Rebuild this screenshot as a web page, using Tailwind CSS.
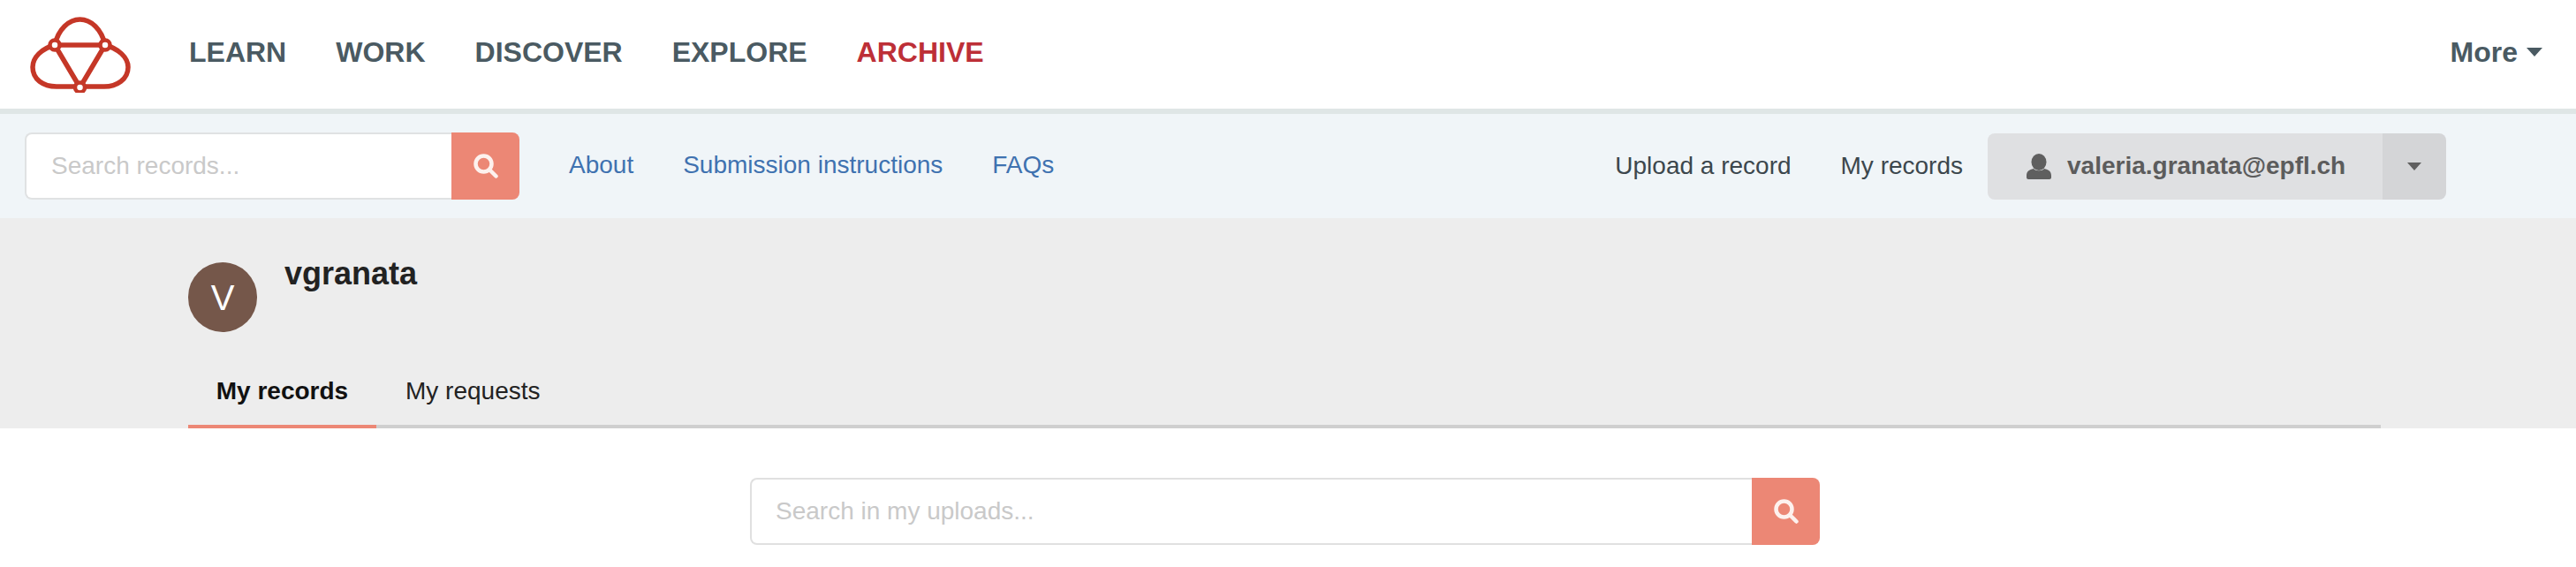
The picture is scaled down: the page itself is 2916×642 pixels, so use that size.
<!DOCTYPE html>
<html>
<head>
<title>My records</title>
<script src="https://cdn.jsdelivr.net/npm/@tailwindcss/browser@4"></script>
</head>
<body class="bg-white font-['Liberation_Sans',Arial,sans-serif] overflow-hidden">
  <!-- top nav -->
  <header class="flex items-center h-[129px] border-b-[6px] border-[#dfe6e6] pl-[30px] pr-[38px]">
    <svg class="w-[120px] h-[90px] shrink-0 -mt-[3px]" viewBox="30 15 120 90" fill="none" stroke="#c53727" stroke-width="5.5">
      <path d="M62 51C47 55 37 65 37 76C37 90 49 98 64 98H118C132 98 145 90 145 76C145 65 134 55 119 51"/>
      <path d="M62 51C66 33 78 22 90.5 22C103 22 115 33 119 51"/>
      <path d="M62 51H119L90.5 99Z" stroke-linejoin="round"/>
      <circle cx="62" cy="51" r="5.5" fill="#fff" stroke-width="4.5"/>
      <circle cx="119" cy="51" r="5.5" fill="#fff" stroke-width="4.5"/>
      <circle cx="90.5" cy="99" r="5.5" fill="#fff" stroke-width="4.5"/>
    </svg>
    <nav class="flex items-center gap-[56px] ml-[64px] pb-[6px] text-[32px] font-bold text-[#4a5a62]">
      <a>LEARN</a>
      <a>WORK</a>
      <a>DISCOVER</a>
      <a>EXPLORE</a>
      <a class="text-[#bd2f37]">ARCHIVE</a>
    </nav>
    <div class="ml-auto flex items-center gap-[10px] pb-[6px] text-[32px] font-bold text-[#4a5a62]">
      <span>More</span>
      <span class="w-0 h-0 border-x-[9px] border-x-transparent border-t-[10px] border-t-[#4a5a62]"></span>
    </div>
  </header>

  <!-- sub nav -->
  <div class="flex items-center h-[118px] bg-[#f0f5f8] pl-[28px] pr-[147px] text-[28px]">
    <form class="flex w-[560px] h-[76px]">
      <input type="text" placeholder="Search records..." class="flex-1 min-w-0 bg-white border-2 border-r-0 border-[#e0e2e3] rounded-l-lg pl-[28px] text-[28px] placeholder:text-[#c9c9c9] outline-none" />
      <button type="button" class="w-[77px] flex items-center justify-center bg-[#ec8775] rounded-r-lg">
        <svg class="w-[28px] h-[28px]" viewBox="0 0 28 28" fill="none" stroke="#fdf1ee" stroke-width="4.5" stroke-linecap="round">
          <circle cx="11.5" cy="11.5" r="9"/>
          <path d="M18.5 18.5L25.5 25.5"/>
        </svg>
      </button>
    </form>
    <div class="flex gap-[56px] ml-[56px] pb-[2px] text-[#3f72b0]">
      <a>About</a>
      <a>Submission instructions</a>
      <a>FAQs</a>
    </div>
    <div class="ml-auto flex items-center text-[#3c474d]">
      <a class="mr-[56px]">Upload a record</a>
      <a class="mr-[28px]">My records</a>
      <div class="flex h-[75px] w-[519px] rounded-lg overflow-hidden font-bold text-[#5c5c5c]">
        <div class="flex-1 flex items-center bg-[#dfe0e2] pl-[44px]">
          <svg class="w-[28px] h-[29px] mr-[18px]" viewBox="0 0 28 29" fill="#5f5f5f">
            <ellipse cx="14" cy="9.5" rx="8.5" ry="9.5"/>
            <path d="M0 25C0 20 3 18 8 17C10 20 18 20 20 17C25 18 28 20 28 25V27C28 28 27 29 26 29H2C1 29 0 28 0 27Z"/>
          </svg>
          <span>valeria.granata@epfl.ch</span>
        </div>
        <div class="w-[72px] flex items-center justify-center bg-[#d4d5d7]">
          <span class="w-0 h-0 border-x-[8px] border-x-transparent border-t-[9px] border-t-[#5f5f5f]"></span>
        </div>
      </div>
    </div>
  </div>

  <!-- user header -->
  <section class="bg-[#ededed] h-[238px] pt-[50px] pl-[213px] pr-[221px]">
    <div class="flex">
      <div class="w-[78px] h-[79px] rounded-full bg-[#75574a] flex items-center justify-center text-white text-[40px]">V</div>
      <h1 class="ml-[31px] -mt-[7px] text-[36px] leading-[40px] font-bold text-[#222]">vgranata</h1>
    </div>
    <div class="flex mt-[35px] h-[74px] border-b-4 border-[#cfcfcf] text-[28px]">
      <a class="w-[213px] -mb-[4px] h-[74px] pb-[6px] flex items-center justify-center border-b-4 border-[#ec8775] font-bold text-[#111]">My records</a>
      <a class="ml-[33px] pb-[6px] flex items-center text-[#222]">My requests</a>
    </div>
  </section>

  <!-- records search -->
  <main class="pt-[56px] pl-[849px]">
    <form class="flex w-[1211px] h-[76px]">
      <input type="text" placeholder="Search in my uploads..." class="flex-1 min-w-0 bg-white border-2 border-r-0 border-[#e0e0e0] rounded-l-lg pl-[27px] text-[28px] placeholder:text-[#c9c9c9] outline-none" />
      <button type="button" class="w-[77px] flex items-center justify-center bg-[#ec8775] rounded-r-lg">
        <svg class="w-[28px] h-[28px]" viewBox="0 0 28 28" fill="none" stroke="#fdf1ee" stroke-width="4.5" stroke-linecap="round">
          <circle cx="11.5" cy="11.5" r="9"/>
          <path d="M18.5 18.5L25.5 25.5"/>
        </svg>
      </button>
    </form>
  </main>
</body>
</html>
